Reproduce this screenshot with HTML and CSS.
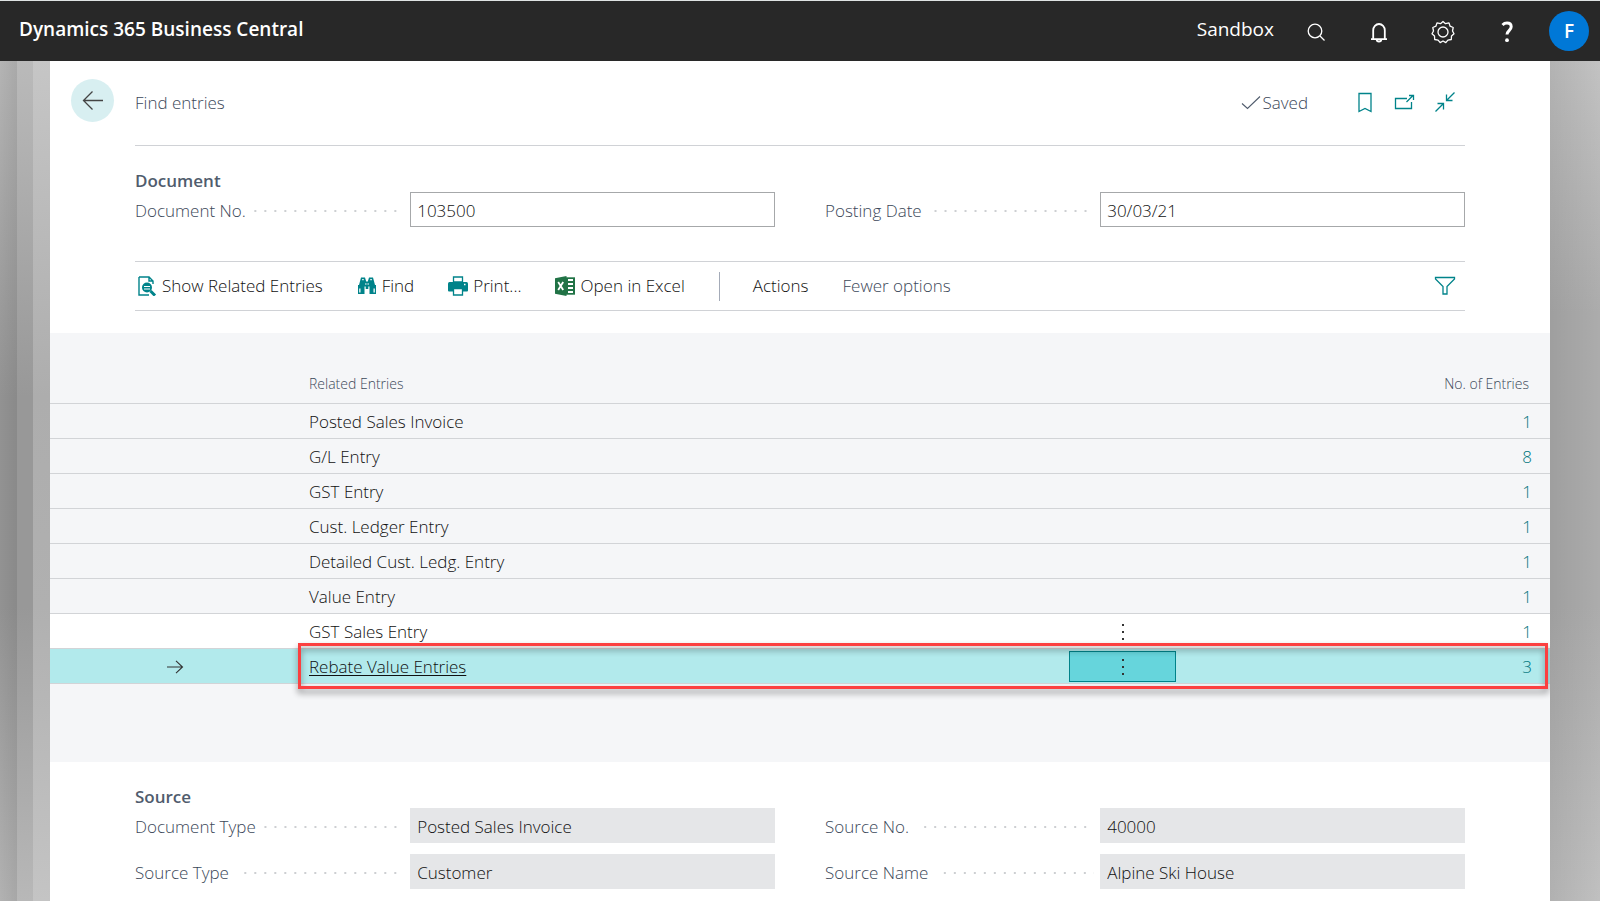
FILE: index.html
```html
<!DOCTYPE html>
<html lang="en">
<head>
<meta charset="utf-8">
<title>Find entries - Dynamics 365 Business Central</title>
<link rel="stylesheet" href="styles.css">
</head>
<body>
<header class="topbar">
  <span class="product">Dynamics 365 Business Central</span>
  <span class="env">Sandbox</span>
  <nav class="tools">
    <button class="tool" aria-label="Search"><svg width="24" height="24" viewBox="0 0 24 24"><circle cx="12" cy="11" r="6.8"/><path d="M17 16l4.500 4.500"/></svg></button>
    <button class="tool" aria-label="Notifications"><svg class="heavy" width="24" height="24" viewBox="0 0 24 24"><path d="M4 19.200h16M6.200 19V10.300a5.800 6.300 0 0 1 11.600 0V19M9.700 19.500a2.300 2 0 0 0 4.600 0"/></svg></button>
    <button class="tool" aria-label="Settings"><svg width="24" height="24" viewBox="0 0 24 24"><circle cx="12" cy="12" r="5"/><path d="M12 1.500l2.500 2.200 3.500-.8 1.100 3.300 3.100 1.300-.7 3.500 1.500 2.700-2.500 2.300-.2 3.500-3.400.6-2.100 2.500L12 21l-2.800 1.600-2.100-2.500-3.400-.6-.2-3.500L1 13.700 2.500 11l-.7-3.500 3.100-1.300L6 2.900l3.500.8z" stroke-linejoin="round"/></svg></button>
    <button class="tool" aria-label="Help"><svg class="help" width="24" height="24" viewBox="0 0 24 24"><path d="M7.500 5c1.500-1.500 3-1.900 4.500-1.900 2.800 0 4.200 1.500 4.200 3.700 0 3.700-4.200 4-4.200 7.700"/><circle cx="12" cy="20.200" r="1.900"/></svg></button>
  </nav>
  <button class="avatar" aria-label="Account">F</button>
</header>
<div class="backdrop">
  <main class="sheet">
    <div class="titlebar">
      <button class="back" aria-label="Back"><svg width="22" height="22" viewBox="0 0 22 22"><path d="M21 10.500H1.500M10.500 1.500l-9 9 9 9"/></svg></button>
      <div class="titlerow">
        <h1 class="title">Find entries</h1>
        <span class="saved"><svg width="20" height="16" viewBox="0 0 20 16"><path d="M1 8.500l5.500 5L19 1.500"/></svg>Saved</span>
        <button class="pageact" aria-label="Bookmark"><svg width="22" height="22" viewBox="0 0 22 22"><path d="M5 1.500h12v18l-6-3-6 3z"/></svg></button>
        <button class="pageact" aria-label="Open in new window"><svg width="22" height="22" viewBox="0 0 22 22"><path d="M13 6.500H1.500v10h16V10M12.500 10l6-6M15 3.500h4.500v4.500"/></svg></button>
        <button class="pageact" aria-label="Collapse"><svg width="22" height="22" viewBox="0 0 22 22"><path d="M1.500 19.500l8-8M3.500 11.500h6v6M20.500 .5l-8 8M12.500 2.500v6h6"/></svg></button>
      </div>
    </div>

    <section class="group document">
      <h2 class="caption">Document</h2>
      <div class="fields">
        <div class="field"><label for="docno">Document No.</label><span class="dots"></span><input id="docno" value="103500"></div>
        <div class="field"><label for="pdate">Posting Date</label><span class="dots"></span><input id="pdate" value="30/03/21"></div>
      </div>
    </section>

    <div class="actions">
      <button class="action"><svg width="20" height="20" viewBox="0 0 20 20"><path d="M2 1h10l4 4v3M2 1v18h10M12 1v4h4" fill="none" stroke="#00838a" stroke-width="1.400"/><circle cx="10" cy="11.500" r="5" fill="#00838a"/><path d="M13.500 15l4.500 4.500" stroke="#00838a" stroke-width="3"/><path d="M7 10.500h6M7 13h6" stroke="#fff" stroke-width="1.200"/></svg>Show Related Entries</button>
      <button class="action"><svg width="20" height="20" viewBox="0 0 20 20"><path fill="#00838a" d="M4 1.500h4l1.200 4h1.600l1.200-4h4l2 7.500h1v9h-6.500v-7.500h-1.200V13H8.700v-2.500H7.500V18H1V9h1z"/><path d="M2.200 12.500h1.300v4H2.200zM16.500 12.500h1.300v4h-1.300zM5.200 3h1.500v1.200H5.200zM13.300 3h1.500v1.200h-1.500zM8.500 7h.8v2h-.8zM10.700 7h.8v2h-.8z" fill="#fff"/></svg>Find</button>
      <button class="action"><svg width="20" height="20" viewBox="0 0 20 20"><path d="M0 7.500q0-1.500 1.500-1.500h17q1.500 0 1.500 1.500v7q0 1-1 1H1q-1 0-1-1z" fill="#00838a"/><path d="M5.500 1h9v5h-9zM5.500 12.500h9V19h-9z" fill="#fff" stroke="#00838a" stroke-width="1.300"/><path d="M16 8.500h1.500" stroke="#fff"/></svg>Print...</button>
      <button class="action"><svg width="20" height="20" viewBox="0 0 20 20"><path d="M0 2.200L11.500 0v20L0 17.800z" fill="#217346"/><path d="M11 1.300h9v17.400h-9z" fill="#217346"/><path d="M13 4h5M13 8h5M13 12h5M13 16h5" stroke="#fff" stroke-width="2"/><path d="M3.200 6l5 8M8.200 6l-5 8" stroke="#fff" stroke-width="1.800"/></svg>Open in Excel</button>
      <span class="divider"></span>
      <button class="action menu">Actions</button>
      <button class="action fewer">Fewer options</button>
      <button class="filter" aria-label="Filter"><svg width="22" height="22" viewBox="0 0 22 22"><path d="M1.500 2.500h19v1.500L13 11.500V19H9v-7.500L1.500 4z"/></svg></button>
    </div>

    <section class="list">
      <table class="grid">
        <colgroup><col class="c-mark"><col><col class="c-more"><col class="c-count"></colgroup>
        <thead><tr><th></th><th class="name">Related Entries</th><th></th><th class="count">No. of Entries</th></tr></thead>
        <tbody>
          <tr><td></td><td class="name">Posted Sales Invoice</td><td></td><td class="count"><a href="#">1</a></td></tr>
          <tr><td></td><td class="name">G/L Entry</td><td></td><td class="count"><a href="#">8</a></td></tr>
          <tr><td></td><td class="name">GST Entry</td><td></td><td class="count"><a href="#">1</a></td></tr>
          <tr><td></td><td class="name">Cust. Ledger Entry</td><td></td><td class="count"><a href="#">1</a></td></tr>
          <tr><td></td><td class="name">Detailed Cust. Ledg. Entry</td><td></td><td class="count"><a href="#">1</a></td></tr>
          <tr><td></td><td class="name">Value Entry</td><td></td><td class="count"><a href="#">1</a></td></tr>
          <tr class="hover"><td></td><td class="name">GST Sales Entry</td><td><button class="more" aria-label="More options"><svg width="4" height="18" viewBox="0 0 4 18"><path d="M1 1h2v2H1zM1 8h2v2H1zM1 15h2v2H1z"/></svg></button></td><td class="count"><a href="#">1</a></td></tr>
          <tr class="selected"><td class="mark"><svg width="18" height="14" viewBox="0 0 18 14"><path d="M1 7h15.500M10 .800L16.500 7 10 13.200"/></svg><span class="highlight"></span></td><td class="name"><a href="#">Rebate Value Entries</a></td><td><button class="more" aria-label="More options"><svg width="4" height="18" viewBox="0 0 4 18"><path d="M1 1h2v2H1zM1 8h2v2H1zM1 15h2v2H1z"/></svg></button></td><td class="count"><a href="#">3</a></td></tr>
        </tbody>
      </table>
    </section>

    <section class="group source">
      <h2 class="caption">Source</h2>
      <div class="fields">
        <div class="field"><label for="dtype">Document Type</label><span class="dots"></span><input id="dtype" value="Posted Sales Invoice" readonly></div>
        <div class="field"><label for="sno">Source No.</label><span class="dots"></span><input id="sno" value="40000" readonly></div>
        <div class="field"><label for="stype">Source Type</label><span class="dots"></span><input id="stype" value="Customer" readonly></div>
        <div class="field"><label for="sname">Source Name</label><span class="dots"></span><input id="sname" value="Alpine Ski House" readonly></div>
      </div>
    </section>
  </main>
</div>
</body>
</html>
```
FILE: styles.css
```css
* { box-sizing: border-box; }
html, body { height: 100%; }
body {
  margin: 0;
  display: flex;
  flex-direction: column;
  overflow: hidden;
  font-family: "Open Sans", "Noto Sans", sans-serif;
  font-size: 17px;
  font-weight: 300;
  line-height: 24px;
  color: #101010;
}
button {
  font: inherit;
  color: inherit;
  background: none;
  border: 0;
  padding: 0;
  display: flex;
  align-items: center;
  justify-content: center;
}
svg { display: block; fill: none; stroke-width: 1.3; }
h1, h2 { margin: 0; font-size: inherit; }

.topbar {
  flex: none;
  display: flex;
  align-items: center;
  height: 61px;
  padding: 0 11px 0 19px;
  border-top: 1px solid #dfe3e3;
  background: #282828;
  color: #fff;
}
.product { flex: 1; font-size: 19px; font-weight: 600; padding-bottom: 4px; }
.env { font-size: 19px; font-weight: 400; padding-bottom: 4px; }
.tools { display: flex; gap: 40px; margin: 2px 30px 0 29px; }
.tool svg { stroke: #fff; }
.tool .heavy { stroke-width: 1.8; }
.tool .help { stroke-width: 3; }
.tool .help circle { fill: #fff; stroke: none; }
.avatar {
  width: 40px;
  height: 40px;
  border-radius: 50%;
  background: #0078d7;
  font-size: 19px;
  font-weight: 600;
}

.backdrop {
  flex: 1;
  min-height: 0;
  padding: 0 50px;
  background:
    linear-gradient(90deg, transparent, rgba(0, 0, 0, 0.06)) left / 17px 100% no-repeat,
    linear-gradient(180deg, #b4b4b4, #929292 40%, #929292 65%, #b2b2b2) left / 17px 100% no-repeat,
    linear-gradient(180deg, #bababa, #989898 40%, #989898 65%, #b8b8b8) 17px 0 / 16px 100% no-repeat,
    linear-gradient(180deg, #c6c6c6, #adadad 40%, #b0b0b0 65%, #c4c4c4) 33px 0 / 17px 100% no-repeat,
    linear-gradient(90deg, rgba(0, 0, 0, 0.08), transparent) right / 50px 100% no-repeat,
    linear-gradient(180deg, #c2c2c2, #acacac 30%, #acacac 65%, #c0c0c0);
}
.sheet { height: 100%; background: #fff; overflow: hidden; }

.titlebar { display: flex; padding: 0 85px 0 21px; }
.back {
  flex: none;
  width: 43px;
  height: 43px;
  margin: 18px 21px 0 0;
  border-radius: 50%;
  background: #d8eff1;
}
.back svg { stroke: #444; }
.titlerow {
  flex: 1;
  display: flex;
  align-items: center;
  height: 85px;
  border-bottom: 1px solid #d0d2d6;
}
.title { flex: 1; font-weight: inherit; color: #3c4859; }
.saved { display: flex; align-items: center; gap: 1px; margin-right: 46px; color: #3c4859; }
.saved svg { stroke: #505c6d; stroke-width: 1.1; }
.pageact { margin-right: 18px; }
.pageact:last-child { margin-right: 9px; }
.pageact svg, .filter svg { stroke: #00838a; stroke-width: 1.3; }

.group { padding: 0 85px; }
.document, .source { padding-top: 24px; }
.caption { font-weight: 600; color: #505c6d; line-height: 22px; }
.fields {
  display: grid;
  grid-template-columns: 1fr 1fr;
  column-gap: 50px;
  row-gap: 11px;
}
.field {
  display: grid;
  grid-template-columns: auto 1fr 57%;
  align-items: center;
  color: #3c4859;
}
.field label { padding-top: 2px; }
.dots {
  height: 2px;
  margin: 2px 6px 0 8px;
  background: radial-gradient(circle at 1px 1px, #cdcfd2 1px, transparent 1px) right / 10px 2px repeat-x;
}
input {
  width: 100%;
  min-width: 0;
  height: 35px;
  padding: 1px 6px 0;
  border: 1px solid #a6a8aa;
  border-radius: 0;
  font: inherit;
  color: #101010;
  background: #fff;
}
input[readonly] { border-color: #e5e6e8; background: #e5e6e8; }

.actions {
  display: flex;
  align-items: center;
  height: 50px;
  margin: 34px 85px 22px;
  padding-left: 2px;
  border-top: 1px solid #d0d2d6;
  border-bottom: 1px solid #d0d2d6;
}
.action { gap: 5px; margin-right: 34px; white-space: nowrap; }
.divider { width: 1px; height: 29px; margin-right: 33px; background: #a4abb8; }
.fewer { color: #3c4859; }
.filter { margin: 0 9px 0 auto; }

.list { padding: 34px 0 78px; background: #f5f6f8; }
.grid { width: 100%; table-layout: fixed; border-collapse: separate; border-spacing: 0; }
.c-mark { width: 259px; }
.c-more { width: 107px; }
.c-count { width: 374px; }
.grid th {
  height: 36px;
  padding: 0 21px 2px 0;
  font-size: 14px;
  font-weight: inherit;
  color: #3c4859;
  text-align: left;
}
.grid td { height: 35px; padding: 1px 0 0; border-top: 1px solid #d2d4d7; line-height: 33px; }
.grid .count { text-align: right; }
.grid td.count { padding-right: 18px; }
.count a { color: #00757c; text-decoration: none; }
.hover { background: #fff; }
.selected { position: relative; background: #b2eaec; }
.grid .selected td { height: 36px; border-bottom: 1px solid #d2d4d7; }
.mark svg { margin: 0 auto 0 116px; stroke: #333; stroke-width: 1.1; }
.selected .name a { color: inherit; text-underline-offset: 2px; }
.more { width: 107px; height: 31px; margin: auto; }
.more svg { fill: #333; }
.selected .more { border: 1px solid #00838a; background: #66d5dc; }
.highlight {
  position: absolute;
  top: -5px;
  bottom: -5px;
  left: 248px;
  right: 2px;
  border: 3px solid #fb4040;
  filter: drop-shadow(0 4px 3px rgba(0, 0, 0, 0.45));
  pointer-events: none;
}
```
